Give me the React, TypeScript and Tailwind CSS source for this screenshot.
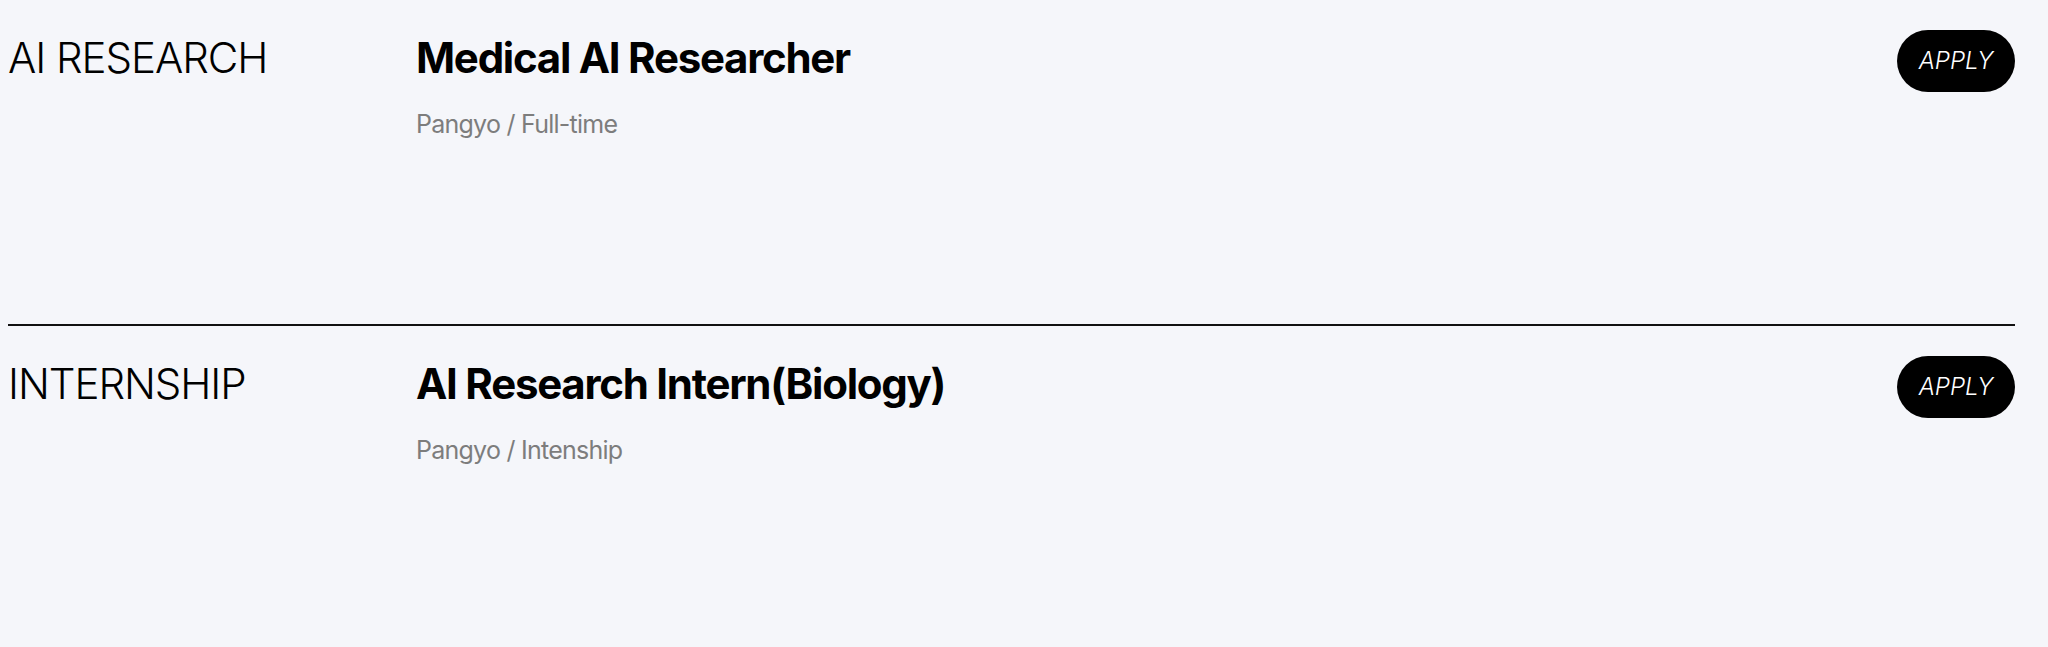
const jobs = [
  { category: "AI RESEARCH", title: "Medical AI Researcher", meta: "Pangyo / Full-time" },
  { category: "INTERNSHIP", title: "AI Research Intern(Biology)", meta: "Pangyo / Intenship" },
];

const JobRow = ({ category, title, meta }: { category: string; title: string; meta: string }) => {
  return (
    <div className="flex h-[326px] items-start border-b-2 border-[#111] pt-[30px] last:border-b-0">
      <div className="mt-[4px] w-[408px] shrink-0 text-[42px] font-light leading-[48px] tracking-[-0.025em] text-black">
        {category}
      </div>
      <div className="mt-[4px] flex flex-1 flex-col">
        <h2 className="text-[42px] font-bold leading-[48px] tracking-[-0.03em] text-black">{title}</h2>
        <p className="mt-[24px] text-[25px] leading-[36px] tracking-[-0.03em] text-[#7d7d7d]">{meta}</p>
      </div>
      <button className="flex h-[62px] w-[118px] items-center justify-center rounded-full bg-black text-[24px] font-light italic text-white">
        APPLY
      </button>
    </div>
  );
};

export default function App() {
  return (
    <div className="min-h-[647px] w-full bg-[#f5f6fa] pl-[8px] pr-[33px] font-['Inter',sans-serif]">
      {jobs.map((job) => (
        <JobRow key={job.title} {...job} />
      ))}
    </div>
  );
}
